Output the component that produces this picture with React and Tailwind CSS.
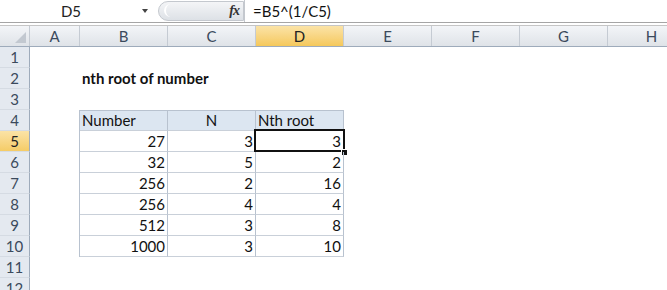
const cols = [
	{ key: "A", w: "w-[50px]" },
	{ key: "B", w: "w-[88px]" },
	{ key: "C", w: "w-[88px]" },
	{ key: "D", w: "w-[88px]" },
	{ key: "E", w: "w-[88px]" },
	{ key: "F", w: "w-[88px]" },
	{ key: "G", w: "w-[88px]" },
	{ key: "H", w: "w-[88px]" },
];

const data = [
	[27, 3, 3],
	[32, 5, 2],
	[256, 2, 16],
	[256, 4, 4],
	[512, 3, 8],
	[1000, 3, 10],
];

const FormulaBar = () => (
	<div className="flex items-center h-[23px] border-b border-[#a5a5a5] bg-white">
		<div className="w-[142px] h-full flex items-center justify-center text-[15px] text-[#222]">D5</div>
		<div className="w-[16px] h-full flex items-center">
			<span className="w-0 h-0 border-l-[3px] border-r-[3px] border-t-[4px] border-l-transparent border-r-transparent border-t-[#444]" />
		</div>
		<div className="relative w-[86px] h-[20px] rounded-l-[10px] bg-gradient-to-b from-[#f4f5f7] to-[#dde1e6] border border-[#c4c8ce] flex items-center justify-end pr-[4px]">
			<span className="absolute left-[5px] top-[2px] w-[10px] h-[13px] rounded-l-full border-l-2 border-white" />
			<span className="font-['Liberation_Serif'] italic font-bold text-[14px] text-[#333] tracking-[-1px]">
				fx
			</span>
		</div>
		<div className="h-full border-l border-[#c4c8ce] pl-[8px] flex items-center text-[15px] text-[#111]">
			=B5^(1/C5)
		</div>
	</div>
);

const ColHeader = () => (
	<div className="flex h-[22px] mt-[2px] border-t border-[#c5c5c5] border-b border-b-[#9eabbb]">
		<div className="relative w-[30px] shrink-0 bg-gradient-to-b from-[#f3f5f8] to-[#dfe3e8] border-r border-[#c5cbd3]">
			<span className="absolute right-[3px] bottom-[3px] w-0 h-0 border-b-[11px] border-l-[11px] border-l-transparent border-b-[#c2c8d0]" />
		</div>
		{cols.map((c) => (
			<div
				key={c.key}
				className={`${c.w} shrink-0 flex items-center justify-center text-[15px] border-r border-[#c5cbd3] ${
					c.key === "D"
						? "bg-gradient-to-b from-[#fbe3a6] to-[#f5c85a] text-[#222]"
						: "bg-gradient-to-b from-[#f3f5f8] to-[#dfe3e8] text-[#3b4a5c]"
				}`}
			>
				{c.key}
			</div>
		))}
	</div>
);

const RowHead = ({ n }) => (
	<div
		className={`w-[30px] shrink-0 h-full flex items-center justify-center text-[15px] border-r border-[#9eabbb] border-b border-b-[#d5dbe3] ${
			n === 5
				? "bg-gradient-to-b from-[#fbe3a6] to-[#f5cc66] text-[#222]"
				: "bg-[#e4e9f0] text-[#3b4a5c]"
		}`}
	>
		{n}
	</div>
);

const Cell = ({ w, children, className = "" }) => (
	<div className={`${w} shrink-0 h-full flex items-center px-[2px] text-[15px] text-[#111] ${className}`}>
		{children}
	</div>
);

const Row = ({ n }) => {
	const inTable = n >= 4 && n <= 10;
	const isHead = n === 4;
	const vals = n >= 5 && n <= 10 ? data[n - 5] : null;
	const tbl = (extra) =>
		`border-r border-[#b8c2cf] ${isHead ? "bg-[#dce6f1] border-t border-t-[#b8c2cf]" : ""} ${
			inTable ? "border-b border-b-[#c9d0d9]" : ""
		} ${extra}`;
	return (
		<div className="flex h-[21px]">
			<RowHead n={n} />
			<Cell w="w-[50px]" className={inTable ? "border-r border-[#b8c2cf]" : ""} />
			{inTable ? (
				<>
					<Cell w="w-[88px]" className={tbl(isHead ? "" : "justify-end")}>
						{isHead ? "Number" : vals[0]}
					</Cell>
					<Cell w="w-[88px]" className={tbl(isHead ? "justify-center" : "justify-end")}>
						{isHead ? "N" : vals[1]}
					</Cell>
					<Cell w="w-[88px]" className={`relative ${tbl(isHead ? "" : "justify-end")}`}>
						{isHead ? "Nth root" : vals[2]}
						{n === 5 && (
							<>
								<span className="absolute left-[-2px] top-[-2px] right-[-2px] bottom-[-1px] border-2 border-[#111]" />
								<span className="absolute right-[-5px] bottom-[-5px] w-[7px] h-[7px] bg-[#111] border border-white" />
							</>
						)}
					</Cell>
				</>
			) : (
				<Cell w="w-[264px]" className="font-bold">
					{n === 2 ? "nth root of number" : ""}
				</Cell>
			)}
			<Cell w="w-[88px]" />
		</div>
	);
};

export default function App() {
	return (
		<div className="w-[667px] h-[290px] overflow-hidden bg-white font-['Lato','Liberation_Sans',sans-serif] leading-none">
			<FormulaBar />
			<ColHeader />
			{[1, 2, 3, 4, 5, 6, 7, 8, 9, 10, 11, 12].map((n) => (
				<Row key={n} n={n} />
			))}
		</div>
	);
}
